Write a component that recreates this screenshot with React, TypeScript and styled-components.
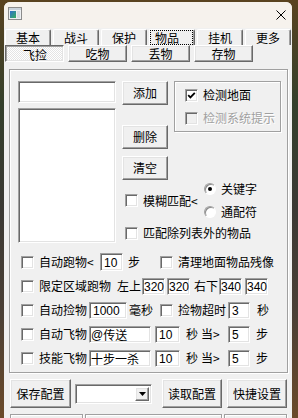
import React from 'react';
import styled, { createGlobalStyle, css } from 'styled-components';

const uiFont = `"Noto Sans CJK SC", "Liberation Sans", sans-serif`;
const numFont = `"Liberation Sans", "Noto Sans CJK SC", sans-serif`;

const GlobalStyle = createGlobalStyle`
  html, body {
    margin: 0;
    padding: 0;
  }
  body {
    width: 298px;
    height: 418px;
    overflow: hidden;
    background: linear-gradient(180deg, #5a4320 0%, #34402c 25%, #3b3934 50%, #4b4036 75%, #6b4a2a 100%);
    font-family: ${uiFont};
    font-size: 12px;
    color: #000;
  }
`;

const raised = css`
  border: 1px solid;
  border-color: #fff #696969 #696969 #fff;
  box-shadow: inset -1px -1px #a0a0a0, inset 1px 1px #e3e3e3;
`;

const sunken = css`
  border: 1px solid;
  border-color: #a0a0a0 #fff #fff #a0a0a0;
  box-shadow: inset 1px 1px #696969, inset -1px -1px #e3e3e3;
`;

const etched = css`
  border: 1px solid #a0a0a0;
  box-shadow: inset 1px 1px #fff, 1px 1px #fff;
`;

const Screen = styled.div`
  padding: 2px 0 0 4px;
  height: 418px;
  box-sizing: border-box;
`;

const Window = styled.div`
  width: 288px;
  height: 416px;
  background: #f0f0f0;
  border-radius: 6px 6px 0 0;
  overflow: hidden;
  display: flex;
  flex-direction: column;
`;

const TitleBar = styled.div`
  height: 26px;
  flex: none;
  background: #f6f2ed;
  display: flex;
  align-items: flex-start;
  justify-content: space-between;
  padding: 5px 6px 0 4px;
  box-sizing: border-box;
`;

const CloseGlyph = styled.svg`
  margin-top: 3px;
`;

const TabRow = styled.div`
  margin-top: 1px;
  padding-left: 1px;
  display: grid;
  grid-template-columns: repeat(6, 46px);
  column-gap: 2px;
`;

const Tab = styled.div<{ $active?: boolean }>`
  height: 16px;
  box-sizing: border-box;
  border: 1px solid;
  border-bottom: none;
  border-color: #fff #696969 #696969 #fff;
  border-radius: 2px 2px 0 0;
  box-shadow: inset -1px 0 #a0a0a0;
  display: flex;
  align-items: center;
  justify-content: center;
  padding: ${p => (p.$active ? '0 2px 0 1px' : '0')};
  line-height: 14px;
`;

const FocusText = styled.span`
  flex: 1;
  height: 13px;
  display: flex;
  align-items: center;
  padding-left: 4px;
  outline: 1px dotted #000;
  line-height: 13px;
`;

const SubTabRow = styled.div`
  padding-left: 1px;
  display: grid;
  grid-template-columns: repeat(4, 59px);
  column-gap: 4px;
`;

const SubTab = styled.div<{ $pressed?: boolean }>`
  height: 17px;
  box-sizing: border-box;
  display: flex;
  align-items: center;
  justify-content: center;
  line-height: 15px;
  ${p =>
    p.$pressed
      ? css`
          border: 1px solid;
          border-color: #696969 #fff #fff #696969;
          box-shadow: inset 1px 1px #a0a0a0, inset -1px -1px #e3e3e3;
          background-image: repeating-conic-gradient(#ffffff 0 25%, #e4e4e4 0 50%);
          background-size: 2px 2px;
          padding: 1px 0 0 1px;
        `
      : raised}
`;

const Panel = styled.div`
  margin: 7px 0 0 5px;
  width: 279px;
  height: 304px;
  box-sizing: border-box;
  ${etched};
  padding: 11px 0 0 8px;
  flex: none;
`;

const Upper = styled.div`
  display: flex;
  gap: 6px;
  height: 162px;
`;

const LeftCol = styled.div`
  width: 98px;
  display: flex;
  flex-direction: column;
  gap: 5px;
`;

const TextBox = styled.div<{ $w?: number; $h?: number; $align?: string }>`
  width: ${p => (p.$w ? `${p.$w}px` : '100%')};
  height: ${p => (p.$h ? `${p.$h}px` : '17px')};
  flex: none;
  box-sizing: border-box;
  background: #fff;
  ${sunken};
  display: flex;
  align-items: center;
  padding: 1px 0 0 ${p => (p.$align === 'tight' ? '1px' : '3px')};
  font-family: ${numFont};
  font-size: 12px;
  line-height: 14px;
  white-space: nowrap;
  overflow: hidden;
`;

const CjkValue = styled.span`
  font-family: ${uiFont};
  font-size: 12px;
`;

const RightArea = styled.div`
  width: 159px;
  display: flex;
  flex-direction: column;
`;

const TopRow = styled.div`
  display: flex;
  gap: 6px;
`;

const ButtonCol = styled.div`
  width: 46px;
  display: flex;
  flex-direction: column;
`;

const Button = styled.div<{ $w?: number; $h?: number; $top?: number }>`
  width: ${p => (p.$w ? `${p.$w}px` : '100%')};
  height: ${p => p.$h ?? 24}px;
  margin-top: ${p => p.$top ?? 0}px;
  flex: none;
  box-sizing: border-box;
  ${raised};
  display: flex;
  align-items: center;
  justify-content: center;
  line-height: 14px;
  background: #f0f0f0;
`;

const GroupBox = styled.div`
  width: 107px;
  height: 51px;
  box-sizing: border-box;
  ${etched};
  padding: 5px 0 0 10px;
  display: flex;
  flex-direction: column;
  gap: 7px;
`;

const CheckLabel = styled.label<{ $w?: number; $disabled?: boolean }>`
  display: flex;
  align-items: center;
  gap: 5px;
  flex: none;
  width: ${p => (p.$w ? `${p.$w}px` : 'auto')};
  height: 16px;
  line-height: 16px;
  white-space: nowrap;
  color: ${p => (p.$disabled ? '#a0a0a0' : '#000')};
  text-shadow: ${p => (p.$disabled ? '1px 1px 0 #fff' : 'none')};
`;

const CheckBox = styled.span<{ $disabled?: boolean }>`
  width: 13px;
  height: 13px;
  flex: none;
  box-sizing: border-box;
  background: ${p => (p.$disabled ? '#f0f0f0' : '#fff')};
  ${sunken};
  display: flex;
  align-items: center;
  justify-content: center;
`;

const FuzzyRow = styled.div`
  margin-top: 1px;
  padding-left: 3px;
  display: flex;
  align-items: center;
`;

const RadioCol = styled.div`
  display: flex;
  flex-direction: column;
  gap: 7px;
`;

const RadioLabel = styled.label`
  display: flex;
  align-items: center;
  gap: 5px;
  height: 16px;
  line-height: 16px;
  white-space: nowrap;
`;

const RadioDot = styled.span<{ $on?: boolean }>`
  width: 12px;
  height: 12px;
  flex: none;
  box-sizing: border-box;
  border-radius: 50%;
  background: #fff;
  border: 1px solid;
  border-color: #a0a0a0 #fff #fff #a0a0a0;
  box-shadow: inset 1px 1px #8a8a8a;
  display: flex;
  align-items: center;
  justify-content: center;
  &::after {
    content: '';
    width: 4px;
    height: 4px;
    border-radius: 50%;
    background: ${p => (p.$on ? '#000' : 'transparent')};
  }
`;

const SingleRow = styled.div<{ $top?: number }>`
  margin-top: ${p => p.$top ?? 0}px;
  padding-left: 3px;
  display: flex;
  align-items: center;
`;

const Lower = styled.div`
  margin-top: 9px;
  display: flex;
  flex-direction: column;
  gap: 4px;
`;

const FormRow = styled.div`
  height: 20px;
  padding-left: 3px;
  display: flex;
  align-items: center;
`;

const Unit = styled.span<{ $w?: number; $pl?: number }>`
  width: ${p => (p.$w ? `${p.$w}px` : 'auto')};
  padding-left: ${p => p.$pl ?? 0}px;
  box-sizing: border-box;
  flex: none;
  white-space: nowrap;
  line-height: 16px;
`;

const Gap = styled.span<{ $w: number }>`
  width: ${p => p.$w}px;
  flex: none;
`;

const BottomBar = styled.div`
  margin-top: 6px;
  padding-left: 6px;
  display: flex;
  align-items: center;
  flex: none;
`;

const Combo = styled.div`
  width: 77px;
  height: 20px;
  margin: 0 10px 0 4px;
  box-sizing: border-box;
  background: #fff;
  ${sunken};
  display: flex;
  justify-content: flex-end;
  padding: 2px;
`;

const ComboArrow = styled.div`
  width: 14px;
  height: 100%;
  box-sizing: border-box;
  ${raised};
  background: #f0f0f0;
  display: flex;
  align-items: center;
  justify-content: center;
`;

const CutRow = styled.div`
  margin-top: 6px;
  padding-left: 6px;
  display: flex;
  gap: 2px;
`;

const CutFrame = styled.div<{ $w: number }>`
  width: ${p => p.$w}px;
  height: 20px;
  flex: none;
  box-sizing: border-box;
  ${etched};
`;

type CheckProps = { label: string; checked?: boolean; disabled?: boolean; w?: number };

const Check: React.FC<CheckProps> = ({ label, checked, disabled, w }) => (
  <CheckLabel $w={w} $disabled={disabled}>
    <CheckBox $disabled={disabled}>
      {checked && (
        <svg width="9" height="9" viewBox="0 0 9 9">
          <polyline points="1.2,4.2 3.4,6.4 7.8,1.8" fill="none" stroke="#000" strokeWidth="1.8" />
        </svg>
      )}
    </CheckBox>
    {label}
  </CheckLabel>
);

const Radio: React.FC<{ label: string; on?: boolean }> = ({ label, on }) => (
  <RadioLabel>
    <RadioDot $on={on} />
    {label}
  </RadioLabel>
);

const mainTabs = ['基本', '战斗', '保护', '物品', '挂机', '更多'];
const subTabs = ['飞捡', '吃物', '丢物', '存物'];

const App: React.FC = () => {
  return (
    <>
      <GlobalStyle />
      <Screen>
        <Window>
          <TitleBar>
            <svg width="14" height="13" viewBox="0 0 14 13">
              <defs>
                <linearGradient id="ico" x1="0" y1="0" x2="1" y2="1">
                  <stop offset="0" stopColor="#2f6fd0" />
                  <stop offset="1" stopColor="#36b05a" />
                </linearGradient>
              </defs>
              <rect x="0.5" y="0.5" width="13" height="12" fill="#eef0f2" stroke="#8c8c8c" />
              <rect x="1" y="1" width="12" height="2" fill="#c9d3dd" />
              <rect x="2" y="4" width="6" height="7" fill="url(#ico)" />
              <rect x="9" y="4" width="3" height="7" fill="#d8dde2" />
            </svg>
            <CloseGlyph width="10" height="10" viewBox="0 0 10 10">
              <path d="M0.5 0.5 L9.5 9.5 M9.5 0.5 L0.5 9.5" stroke="#000" strokeWidth="1" />
            </CloseGlyph>
          </TitleBar>

          <TabRow>
            {mainTabs.map(t => (
              <Tab key={t} $active={t === '物品'}>
                {t === '物品' ? <FocusText>{t}</FocusText> : t}
              </Tab>
            ))}
          </TabRow>

          <SubTabRow>
            {subTabs.map(t => (
              <SubTab key={t} $pressed={t === '飞捡'}>
                {t}
              </SubTab>
            ))}
          </SubTabRow>

          <Panel>
            <Upper>
              <LeftCol>
                <TextBox $h={22} />
                <TextBox $h={135} />
              </LeftCol>
              <RightArea>
                <TopRow>
                  <ButtonCol>
                    <Button>添加</Button>
                    <Button $top={20}>删除</Button>
                    <Button $top={7}>清空</Button>
                  </ButtonCol>
                  <GroupBox>
                    <Check label="检测地面" checked />
                    <Check label="检测系统提示" disabled />
                  </GroupBox>
                </TopRow>
                <FuzzyRow>
                  <Check label="模糊匹配<" w={79} />
                  <RadioCol>
                    <Radio label="关键字" on />
                    <Radio label="通配符" />
                  </RadioCol>
                </FuzzyRow>
                <SingleRow $top={5}>
                  <Check label="匹配除列表外的物品" />
                </SingleRow>
              </RightArea>
            </Upper>

            <Lower>
              <FormRow>
                <Check label="自动跑物<" w={79} />
                <TextBox $w={23} $h={18}>10</TextBox>
                <Unit $w={37} $pl={5}>步</Unit>
                <Check label="清理地面物品残像" />
              </FormRow>
              <FormRow>
                <Check label="限定区域跑物" w={96} />
                <Unit $w={25}>左上</Unit>
                <TextBox $w={23} $align="tight">320</TextBox>
                <Gap $w={2} />
                <TextBox $w={23} $align="tight">320</TextBox>
                <Unit $w={29} $pl={4}>右下</Unit>
                <TextBox $w={23} $align="tight">340</TextBox>
                <Gap $w={3} />
                <TextBox $w={23} $align="tight">340</TextBox>
              </FormRow>
              <FormRow>
                <Check label="自动捡物" w={68} />
                <TextBox $w={38}>1000</TextBox>
                <Unit $w={33} $pl={2}>毫秒</Unit>
                <Check label="捡物超时" w={68} />
                <TextBox $w={22}>3</TextBox>
                <Unit $pl={7}>秒</Unit>
              </FormRow>
              <FormRow>
                <Check label="自动飞物" w={68} />
                <TextBox $w={62} $align="tight">@<CjkValue>传送</CjkValue></TextBox>
                <Gap $w={4} />
                <TextBox $w={25}>10</TextBox>
                <Unit $w={21} $pl={6}>秒</Unit>
                <Unit $w={27}>当&gt;</Unit>
                <TextBox $w={22}>5</TextBox>
                <Unit $pl={6}>步</Unit>
              </FormRow>
              <FormRow>
                <Check label="技能飞物" w={68} />
                <TextBox $w={62} $align="tight"><CjkValue>十步一杀</CjkValue></TextBox>
                <Gap $w={4} />
                <TextBox $w={25}>10</TextBox>
                <Unit $w={21} $pl={6}>秒</Unit>
                <Unit $w={27}>当&gt;</Unit>
                <TextBox $w={22}>5</TextBox>
                <Unit $pl={6}>步</Unit>
              </FormRow>
            </Lower>
          </Panel>

          <BottomBar>
            <Button $w={61} $h={29}>保存配置</Button>
            <Combo>
              <ComboArrow>
                <svg width="7" height="4" viewBox="0 0 7 4">
                  <path d="M0 0 H7 L3.5 4 Z" fill="#000" />
                </svg>
              </ComboArrow>
            </Combo>
            <Button $w={60} $h={29}>读取配置</Button>
            <Gap $w={5} />
            <Button $w={60} $h={29}>快捷设置</Button>
          </BottomBar>

          <CutRow>
            <CutFrame $w={73} />
            <CutFrame $w={137} />
            <CutFrame $w={63} />
          </CutRow>
        </Window>
      </Screen>
    </>
  );
};

export default App;
